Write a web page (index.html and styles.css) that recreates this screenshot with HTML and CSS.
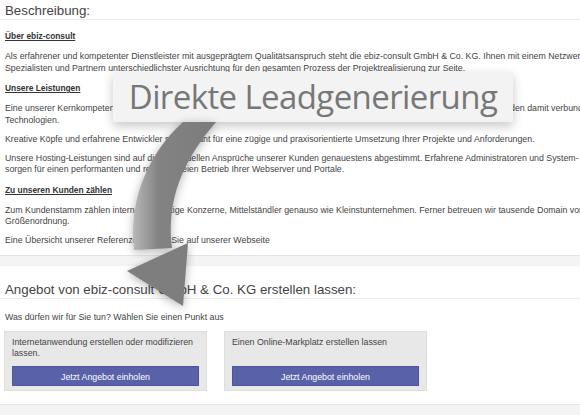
FILE: index.html
```html
<!DOCTYPE html>
<html lang="de">
<head>
<meta charset="utf-8">
<title>Beschreibung</title>
<link rel="stylesheet" href="styles.css">
</head>
<body>
<main class="page">
  <section class="desc">
    <h2 class="title">Beschreibung:</h2>
    <div class="text">
      <h4 class="first">Über ebiz-consult</h4>
      <p class="after-h">Als erfahrener und kompetenter Dienstleister mit ausgeprägtem Qualitätsanspruch steht die ebiz-consult GmbH &amp; Co. KG. Ihnen mit einem Netzwerk aus<br>Spezialisten und Partnern unterschiedlichster Ausrichtung für den gesamten Prozess der Projektrealisierung zur Seite.</p>
      <h4>Unsere Leistungen</h4>
      <p class="after-h">Eine unserer Kernkompetenzen ist die Konzeption und Entwicklung von individuellen Webanwendung, Portalen und Shops sowie den damit verbundenen<br>Technologien.</p>
      <p>Kreative Köpfe und erfahrene Entwickler sind Garant für eine zügige und praxisorientierte Umsetzung Ihrer Projekte und Anforderungen.</p>
      <p>Unsere Hosting-Leistungen sind auf die individuellen Ansprüche unserer Kunden genauestens abgestimmt. Erfahrene Administratoren und System-<br>sorgen für einen performanten und reibungsfreien Betrieb Ihrer Webserver und Portale.</p>
      <h4>Zu unseren Kunden zählen</h4>
      <p class="after-h">Zum Kundenstamm zählen international tätige Konzerne, Mittelständler genauso wie Kleinstunternehmen. Ferner betreuen wir tausende Domain von jeder<br>Größenordnung.</p>
      <p>Eine Übersicht unserer Referenzen finden Sie auf unserer Webseite</p>
    </div>
  </section>
  <div class="band"></div>
  <section class="offer">
    <h2 class="title">Angebot von ebiz-consult GmbH &amp; Co. KG erstellen lassen:</h2>
    <p class="lead">Was dürfen wir für Sie tun? Wählen Sie einen Punkt aus</p>
    <div class="cards">
      <div class="card">
        <p>Internetanwendung erstellen oder modifizieren<br>lassen.</p>
        <a class="btn" href="#">Jetzt Angebot einholen</a>
      </div>
      <div class="card">
        <p>Einen Online-Markplatz erstellen lassen</p>
        <a class="btn" href="#">Jetzt Angebot einholen</a>
      </div>
    </div>
  </section>
  <div class="band"></div>
</main>
<div class="callout">Direkte Leadgenerierung</div>
<svg class="arrow" width="580" height="415" viewBox="0 0 580 415" aria-hidden="true">
  <defs>
    <linearGradient id="shaft" x1="0" y1="0" x2="1" y2="0">
      <stop offset="0" stop-color="#b8b8b8"/>
      <stop offset="0.3" stop-color="#838383"/>
      <stop offset="1" stop-color="#7b7b7b"/>
    </linearGradient>
  </defs>
  <path d="M183 122 C152 150 128 195 134 250 L172 248 C166 200 183 160 216 122 Z" fill="url(#shaft)"/>
  <polygon points="127,271 188,243 183,306" fill="#7e7e7e"/>
</svg>
</body>
</html>
```

FILE: styles.css
```css
html, body {
  margin: 0;
  padding: 0;
}

body {
  width: 580px;
  height: 415px;
  overflow: hidden;
  position: relative;
  background: #fff;
  font-family: "Liberation Sans", Arial, sans-serif;
  color: #444;
}

.page {
  white-space: nowrap;
}

.title {
  margin: 0;
  padding: 3px 0 0 5px;
  height: 16px;
  font-size: 13.3px;
  font-weight: normal;
  line-height: 16px;
  color: #444;
  border-bottom: 1px solid #ececec;
}

.desc {
  height: 255px;
  box-sizing: border-box;
}

.text {
  padding-left: 5px;
  font-size: 8.8px;
  line-height: 11.5px;
}

.text h4 {
  margin: 9px 0 0;
  height: 11px;
  font-size: 8.4px;
  line-height: 11px;
  font-weight: bold;
  text-decoration: underline;
  color: #333;
}

.text h4.first {
  margin-top: 11px;
}

.text p {
  margin: 7.5px 0 0;
  font-size: 8.8px;
  line-height: 11.5px;
}

.text p.after-h {
  margin-top: 9px;
}

.band {
  height: 10px;
  background: #f4f4f4;
  border-top: 1px solid #e6e6e6;
}

.offer {
  padding-top: 13px;
  height: 138px;
  box-sizing: border-box;
}

.lead {
  margin: 13px 0 0;
  padding-left: 5px;
  font-size: 8.8px;
  line-height: 11.5px;
}

.cards {
  display: flex;
  gap: 17px;
  margin-top: 7px;
  padding-left: 4px;
}

.card {
  width: 203px;
  height: 60px;
  box-sizing: border-box;
  display: flex;
  flex-direction: column;
  padding: 5px 7px 4px;
  background: #e8e8e8;
  border: 1px solid #dedede;
}

.card p {
  margin: 0;
  font-size: 8.8px;
  line-height: 11.5px;
  color: #444;
}

.btn {
  margin-top: auto;
  display: block;
  height: 20px;
  line-height: 20px;
  text-align: center;
  background: #5961a8;
  border: 1px solid #4d559c;
  box-sizing: border-box;
  color: #fff;
  font-size: 8.8px;
  text-decoration: none;
}

.callout {
  position: absolute;
  left: 113px;
  top: 72px;
  width: 400px;
  height: 50px;
  background: #f3f3f3;
  box-shadow: 0 4px 10px rgba(0, 0, 0, 0.22);
  font-family: "Open Sans", sans-serif;
  font-size: 33px;
  line-height: 50px;
  letter-spacing: -0.6px;
  text-align: center;
  color: #777;
}

.arrow {
  position: absolute;
  left: 0;
  top: 0;
  pointer-events: none;
  filter: drop-shadow(0 2px 5px rgba(0, 0, 0, 0.3));
}
```
